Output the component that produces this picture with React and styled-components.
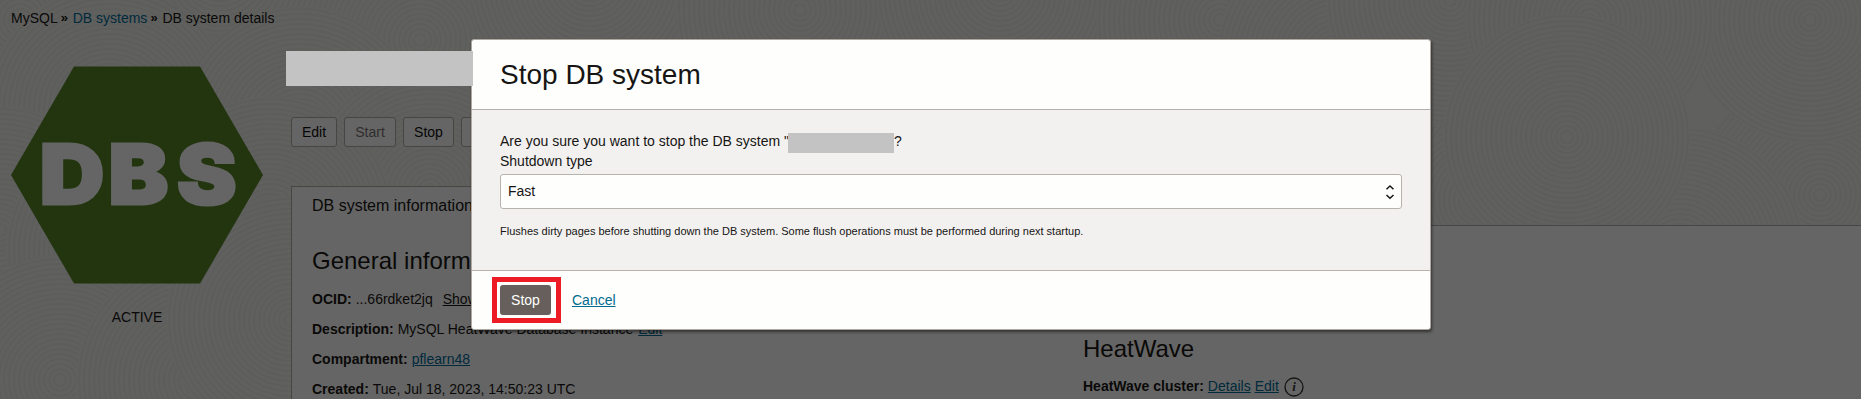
import React from 'react';
import styled, { createGlobalStyle } from 'styled-components';

const Global = createGlobalStyle`
  * { box-sizing: border-box; }
  body { margin: 0; background: #fff; font: 14px/20px "Liberation Sans", Arial, sans-serif; color: #0a0908; }
`;

const Page = styled.div`
  position: relative;
  width: 1861px;
  height: 399px;
  overflow: hidden;
  background: #60605e;
`;
const Texture = styled.svg`
  position: absolute;
  inset: 0;
  width: 100%;
  height: 100%;
`;
const Content = styled.div`
  position: relative;
  height: 100%;
  display: flex;
  flex-direction: column;
`;
const Breadcrumb = styled.nav`
  display: flex;
  flex: none;
  height: 58px;
  padding: 8px 11px 0;
  white-space: pre;
`;
const CrumbLink = styled.a`
  color: #002a3c;
`;
const Separator = styled.span`
  width: 15px;
  padding-left: 3px;
  font-weight: bold;
  font-size: 13px;
`;
const Columns = styled.div`
  display: flex;
  flex: 1;
  min-height: 0;
`;
const Side = styled.aside`
  width: 291px;
  padding: 8px 28px 0 11px;
`;
const Badge = styled.svg`
  display: block;
  width: 252px;
  height: 218px;
`;
const Status = styled.div`
  width: 252px;
  margin-top: 23px;
  text-align: center;
`;
const Main = styled.main`
  flex: 1;
  padding-top: 59px;
`;
const Actions = styled.div`
  display: flex;
  gap: 7px;
`;
const ActionButton = styled.button`
  height: 30px;
  width: ${(p) => p.$width}px;
  padding: 0;
  border: 1px solid #484645;
  border-radius: 3px;
  background: #656565;
  font: inherit;
  color: ${(p) => (p.disabled ? '#302e2d' : '#050505')};
`;
const TabBar = styled.div`
  display: flex;
  margin-top: 39px;
`;
const Tab = styled.div`
  width: 196px;
  height: 40px;
  padding: 9px 0 0 20px;
  border: 1px solid #484645;
  border-bottom: 0;
  background: #656565;
  font-size: 16px;
  white-space: nowrap;
`;
const TabFill = styled.div`
  flex: 1;
  border-bottom: 1px solid #484645;
`;
const Panel = styled.section`
  display: flex;
  height: 200px;
  padding-left: 20px;
  border-left: 1px solid #484645;
  background: #656565;
`;
const Details = styled.div`
  width: ${(p) => p.$width}px;
  padding-top: ${(p) => p.$top}px;
`;
const Heading = styled.h2`
  margin: 0 0 ${(p) => p.$gap}px;
  font-size: 24px;
  line-height: 28px;
  font-weight: normal;
`;
const Row = styled.div`
  display: flex;
  gap: 4px;
  height: 30px;
  line-height: 30px;
  white-space: nowrap;
`;
const Link = styled.a`
  color: ${(p) => (p.$plain ? '#0a0908' : '#002a3c')};
  text-decoration: underline;
  margin-left: ${(p) => p.$indent || 0}px;
`;
const InfoIcon = styled.svg`
  width: 20px;
  height: 20px;
  margin: 6px 0 0 1px;
`;

const Dialog = styled.div`
  position: absolute;
  left: 471px;
  top: 39px;
  width: 960px;
  height: 291px;
  display: flex;
  flex-direction: column;
  border: 1px solid #aea8a2;
  border-radius: 3px;
  background: #fefefd;
  color: #161513;
  box-shadow: 1px 2px 3px rgba(0, 0, 0, 0.5);
`;
const DialogHeader = styled.header`
  height: 70px;
  padding: 18px 28px 0;
  border-bottom: 1px solid #b4afab;
  font-size: 28px;
  line-height: 34px;
`;
const DialogBody = styled.div`
  flex: 1;
  padding: 21px 28px 0;
  background: #f3f1f0;
`;
const Question = styled.div`
  display: flex;
  height: 20px;
`;
const Redacted = styled.span`
  width: 106px;
  height: 20px;
  margin: 2px 0 0 -1px;
  background: #c3c3c3;
`;
const Select = styled.div`
  display: flex;
  justify-content: space-between;
  align-items: center;
  height: 35px;
  margin-top: 3px;
  padding: 0 6px 1px 7px;
  border: 1px solid #b8b2ac;
  border-radius: 3px;
  background: #fefefd;
`;
const Chevrons = styled.svg`
  width: 10px;
  height: 16px;
  margin-top: 2px;
`;
const Hint = styled.p`
  margin: 12px 0 0;
  font-size: 11px;
`;
const DialogFooter = styled.footer`
  display: flex;
  align-items: center;
  height: 59px;
  padding-left: 20px;
  border-top: 1px solid #bab1aa;
`;
const Highlight = styled.div`
  width: 69px;
  height: 46px;
  padding: 3px;
  border: 5px solid #ed1c24;
  margin-right: 11px;
`;
const StopButton = styled.button`
  display: block;
  width: 51px;
  height: 30px;
  padding: 0;
  border: 0;
  border-radius: 3px;
  background: #665f5b;
  color: #fff;
  font: inherit;
`;
const CancelLink = styled.a`
  color: #006b8f;
  text-decoration: underline;
`;
const RedactedTitle = styled.div`
  position: absolute;
  left: 286px;
  top: 51px;
  width: 187px;
  height: 35px;
  background: #c3c3c3;
`;

const rings = [];
for (let r = 6; r < 125; r += 5) rings.push(r);

const swirls = [
  [20, 20], [220, -30], [420, 40], [590, -20], [800, 10], [1000, -10], [1220, 20], [1820, 195],
  [1680, 250], [1480, 200], [1340, 60], [1450, 0], [1810, 20], [1590, 20], [1567, 137],
  [110, 110], [300, 130], [430, 190],
  [0, 230], [130, 250], [270, 220],
  [60, 380], [200, 380], [290, 320],
];

const Swirl = ({ x, y }) => (
  <g transform={`translate(${x} ${y})`} fill="none" stroke="#5d5d5c" strokeWidth="1.7">
    <circle r="124" fill="#60605e" stroke="none" />
    {rings.map((r) => <circle key={r} r={r} />)}
  </g>
);

export default function App() {
  return (
    <>
      <Global />
      <Page>
        <Texture>{swirls.map(([x, y]) => <Swirl key={`${x},${y}`} x={x} y={y} />)}</Texture>
        <Content>
          <Breadcrumb>
            <span>MySQL</span><Separator>»</Separator>
            <CrumbLink>DB systems</CrumbLink><Separator>»</Separator>
            <span>DB system details</span>
          </Breadcrumb>
          <Columns>
            <Side>
              <Badge viewBox="0 0 252 218">
                <path d="M63 .5H189L252 109 189 217.500H63L0 109Z" fill="#22350f" />
                <text
                  transform="scale(1.09 1)"
                  x="26.300 89.400 152.400"
                  y="138.500"
                  fontFamily="Inter"
                  fontWeight="900"
                  fontSize="82"
                  fill="#656565"
                  stroke="#656565"
                  strokeWidth="3"
                >
                  DBS
                </text>
              </Badge>
              <Status>ACTIVE</Status>
            </Side>
            <Main>
              <Actions>
                <ActionButton $width={46}>Edit</ActionButton>
                <ActionButton $width={52} disabled>Start</ActionButton>
                <ActionButton $width={51}>Stop</ActionButton>
                <ActionButton $width={110} />
              </Actions>
              <TabBar>
                <Tab>DB system information</Tab>
                <TabFill />
              </TabBar>
              <Panel>
                <Details $width={771} $top={21}>
                  <Heading $gap={9}>General information</Heading>
                  <Row><b>OCID:</b><span>...66rdket2jq</span><Link $plain $indent={6}>Show</Link></Row>
                  <Row><b>Description:</b><span>MySQL HeatWave Database Instance</span><Link $indent={1}>Edit</Link></Row>
                  <Row><b>Compartment:</b><Link>pflearn48</Link></Row>
                  <Row><b>Created:</b><span>Tue, Jul 18, 2023, 14:50:23 UTC</span></Row>
                </Details>
                <Details $width={400} $top={109}>
                  <Heading $gap={8}>HeatWave</Heading>
                  <Row>
                    <b>HeatWave cluster:</b><Link>Details</Link><Link>Edit</Link>
                    <InfoIcon viewBox="0 0 20 20">
                      <circle cx="10" cy="10" r="9" fill="none" stroke="#161513" strokeWidth="1.3" />
                      <text x="10" y="14" textAnchor="middle" fontFamily="Liberation Serif" fontStyle="italic" fontWeight="bold" fontSize="13" fill="#161513">i</text>
                    </InfoIcon>
                  </Row>
                </Details>
              </Panel>
            </Main>
          </Columns>
        </Content>
        <Dialog role="dialog">
          <DialogHeader>Stop DB system</DialogHeader>
          <DialogBody>
            <Question>Are you sure you want to stop the DB system "<Redacted />?</Question>
            <div>Shutdown type</div>
            <Select>
              Fast
              <Chevrons viewBox="0 0 10 16" fill="none" stroke="#161513" strokeWidth="1.5">
                <path d="M1.500 5.200 5 2 8.500 5.200M1.500 11 5 14.200 8.500 11" />
              </Chevrons>
            </Select>
            <Hint>Flushes dirty pages before shutting down the DB system. Some flush operations must be performed during next startup.</Hint>
          </DialogBody>
          <DialogFooter>
            <Highlight><StopButton>Stop</StopButton></Highlight>
            <CancelLink>Cancel</CancelLink>
          </DialogFooter>
        </Dialog>
        <RedactedTitle />
      </Page>
    </>
  );
}
